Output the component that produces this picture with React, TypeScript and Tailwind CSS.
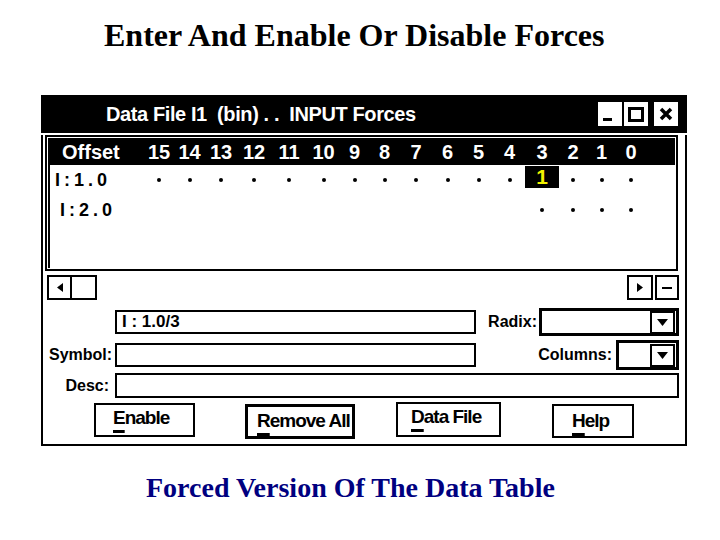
import type { ReactNode } from "react"

const cols = [
  { n: "15", w: "w-[30px]" },
  { n: "14", w: "w-[31px]" },
  { n: "13", w: "w-[32px]" },
  { n: "12", w: "w-[34px]" },
  { n: "11", w: "w-[36px]" },
  { n: "10", w: "w-[33px]" },
  { n: "9", w: "w-[29px]" },
  { n: "8", w: "w-[31px]" },
  { n: "7", w: "w-[32px]" },
  { n: "6", w: "w-[31px]" },
  { n: "5", w: "w-[31px]" },
  { n: "4", w: "w-[31px]" },
  { n: "3", w: "w-[34px]" },
  { n: "2", w: "w-[28px]" },
  { n: "1", w: "w-[29px]" },
  { n: "0", w: "w-[30px]" },
]

const sans = "font-['Liberation_Sans',Arial,sans-serif] font-bold"

function Dot() {
  return <span className="block size-[4px] rounded-full bg-black" />
}

function DropButton() {
  return (
    <div className="flex h-[23px] w-[25px] items-center justify-center border-2 border-black bg-white">
      <svg width="11" height="7" viewBox="0 0 11 7">
        <path d="M0 0 H11 L5.5 7 Z" fill="black" />
      </svg>
    </div>
  )
}

function Button({ first, rest, className }: { first: string; rest: string; className: string }) {
  return (
    <div className={`flex items-center whitespace-nowrap border-black bg-white text-[19px] tracking-[-1px] text-black ${className}`}>
      <span className="underline decoration-[3px] underline-offset-[6px]">{first}</span>
      <span>{rest}</span>
    </div>
  )
}

function Field({ children, className }: { children?: ReactNode; className: string }) {
  return (
    <div className={`flex items-center border-2 border-black bg-white pl-[5px] ${className}`}>
      {children}
    </div>
  )
}

export default function App() {
  return (
    <div className="relative h-[540px] w-[720px] overflow-hidden bg-white">
      <h1 className="pt-[17px] pl-[104px] font-['Liberation_Serif',serif] text-[32px] font-bold leading-[36px] text-black">
        Enter And Enable Or Disable Forces
      </h1>

      <div className={`ml-[41px] mt-[42px] w-[646px] ${sans}`}>
        {/* title bar */}
        <div className="flex h-[38px] items-center bg-black pl-[65px] pr-[9px]">
          <span className="flex-1 whitespace-pre text-[20px] tracking-[-0.4px] text-white">
            {"Data File I1  (bin) . .  INPUT Forces"}
          </span>
          <div className="flex items-center gap-[2px]">
            <div className="flex size-[24px] items-end bg-white pb-[5px] pl-[5px]">
              <span className="block h-[3px] w-[9px] bg-black" />
            </div>
            <div className="flex size-[24px] items-center justify-center bg-white">
              <span className="block h-[15px] w-[16px] border-[3px] border-black" />
            </div>
            <div className="ml-[4px] flex size-[24px] items-center justify-center bg-white">
              <svg width="14" height="14" viewBox="0 0 14 14">
                <path d="M2 2 L12 12 M12 2 L2 12" stroke="black" strokeWidth="3.5" />
              </svg>
            </div>
          </div>
        </div>

        {/* body */}
        <div className="mt-[2px] border-x-2 border-b-2 border-black pb-[5px] pr-[6px]">
          {/* data grid */}
          <div className="ml-[2px] mt-[1px] h-[136px] w-[633px] border-2 border-black p-px">
            <div className="h-full border-l-2 border-black">
              <div className="flex h-[27px] items-center bg-black text-[20px] text-white">
                <span className="w-[94px] pl-[12px]">Offset</span>
                {cols.map((c) => (
                  <span key={c.n} className={`${c.w} text-center`}>
                    {c.n}
                  </span>
                ))}
              </div>
              <div className="flex h-[30px] items-center text-[18px] text-black">
                <span className="w-[94px] pl-[5px] tracking-[4px]">I:1.0</span>
                {cols.map((c) =>
                  c.n === "3" ? (
                    <span key={c.n} className={`${c.w} mt-px flex h-[22px] items-center justify-center self-start bg-black text-[21px] text-[#f2f200]`}>
                      1
                    </span>
                  ) : (
                    <span key={c.n} className={`${c.w} flex justify-center`}>
                      <Dot />
                    </span>
                  ),
                )}
              </div>
              <div className="flex h-[30px] items-center text-[18px] text-black">
                <span className="w-[94px] pl-[10px] tracking-[4px]">I:2.0</span>
                {cols.map((c) => (
                  <span key={c.n} className={`${c.w} flex justify-center`}>
                    {Number(c.n) <= 3 && <Dot />}
                  </span>
                ))}
              </div>
            </div>
          </div>

          {/* scroll bar */}
          <div className="mt-[4px] flex h-[25px] items-stretch pl-[4px]">
            <div className="flex w-[25px] items-center justify-center border-2 border-black">
              <svg width="6" height="9" viewBox="0 0 6 9">
                <path d="M6 0 V9 L0 4.5 Z" fill="black" />
              </svg>
            </div>
            <div className="w-[25px] border-2 border-l-0 border-black" />
            <div className="flex-1" />
            <div className="flex w-[26px] items-center justify-center border-2 border-black">
              <svg width="6" height="9" viewBox="0 0 6 9">
                <path d="M0 0 V9 L6 4.5 Z" fill="black" />
              </svg>
            </div>
            <div className="ml-[2px] flex w-[24px] items-center justify-center border-2 border-black">
              <span className="block h-[2px] w-[10px] bg-black" />
            </div>
          </div>

          {/* form */}
          <div className="mt-[8px] flex h-[28px] items-center text-[16px] text-black">
            <div className="w-[72px]" />
            <Field className="h-[24px] w-[361px] text-[17px]">I : 1.0/3</Field>
            <span className="flex-1 text-right">Radix:</span>
            <div className="ml-[2px] flex h-[28px] w-[140px] items-center justify-end border-[3px] border-black pr-px">
              <DropButton />
            </div>
          </div>
          <div className="mt-[4px] flex h-[30px] items-center text-[16px] text-black">
            <span className="w-[67px] pl-[6px]">Symbol:</span>
            <Field className="ml-[5px] h-[24px] w-[361px]" />
            <span className="flex-1 text-right">Columns:</span>
            <div className="ml-[4px] flex h-[30px] w-[63px] items-center justify-end border-[3px] border-black pr-px">
              <DropButton />
            </div>
          </div>
          <div className="mt-[3px] flex h-[25px] items-center text-[16px] text-black">
            <span className="w-[67px] pr-[1px] text-right">Desc:</span>
            <Field className="ml-[5px] h-[25px] flex-1" />
          </div>

          {/* buttons */}
          <div className="mt-[4px] flex h-[37px] items-start">
            <Button first="E" rest="nable" className="ml-[51px] mt-[1px] h-[34px] w-[101px] border-2 pb-[4px] pl-[17px]" />
            <Button first="R" rest="emove All" className="ml-[50px] mt-[2px] h-[35px] w-[110px] border-[3px] pl-[9px]" />
            <Button first="D" rest="ata File" className="ml-[41px] h-[35px] w-[105px] border-2 pb-[4px] pl-[13px]" />
            <Button first="H" rest="elp" className="ml-[51px] mt-[2px] h-[34px] w-[82px] border-2 pl-[18px]" />
          </div>
        </div>
      </div>

      <p className="mt-[26px] pl-[146px] font-['Liberation_Serif',serif] text-[28px] font-bold leading-[32px] text-[#000080]">
        Forced Version Of The Data Table
      </p>
    </div>
  )
}
